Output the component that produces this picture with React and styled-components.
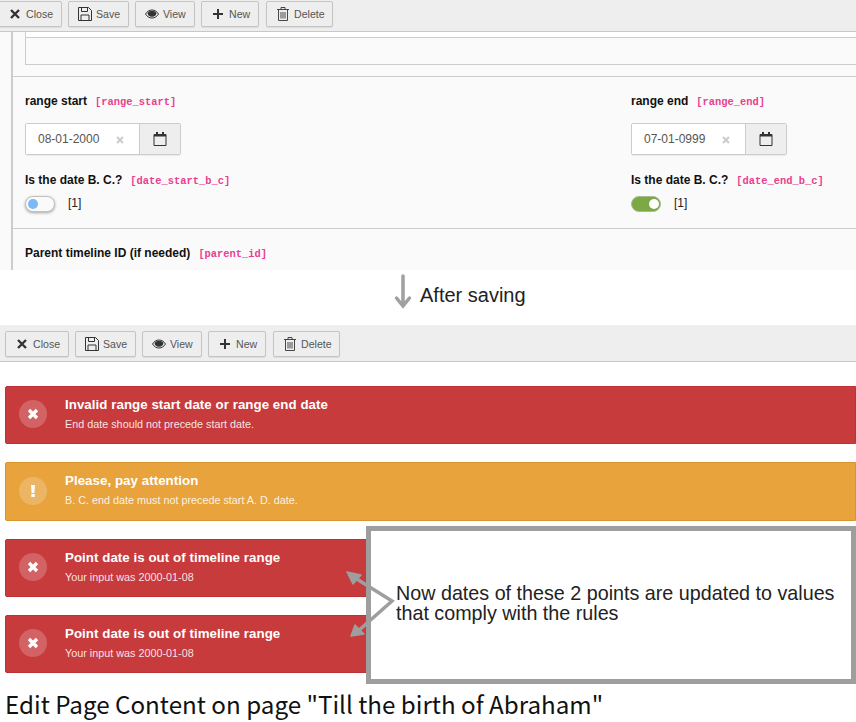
import React from 'react';
import styled, { createGlobalStyle } from 'styled-components';

const GlobalStyle = createGlobalStyle`
    html, body {
        margin: 0;
        padding: 0;
        background: #fff;
        font-family: "Liberation Sans", Arial, sans-serif;
    }
`;

const Page = styled.div`
    position: relative;
    width: 856px;
    height: 722px;
    overflow: hidden;
    background: #fff;
`;

const EditPanel = styled.div`
    height: 270px;
    overflow: hidden;
    background: #fafafa;
`;

const Toolbar = styled.div`
    display: flex;
    gap: 6px;
    box-sizing: border-box;
    height: ${(p) => (p.$compact ? '32px' : '37px')};
    padding: ${(p) => (p.$compact ? '1px 0 0 0' : '6px 0 0 5px')};
    background: #eee;
    border-bottom: 1px solid #c8c8c8;
    ${(p) => p.$compact && '& > :first-child { margin-left: -2px; }'}
`;

const ToolButton = styled.div`
    display: flex;
    align-items: center;
    gap: 4px;
    box-sizing: border-box;
    width: ${(p) => p.$width}px;
    height: 26px;
    margin-left: ${(p) => p.$shift || 0}px;
    padding-left: 9px;
    background: #eee;
    border: 1px solid #c4c4c4;
    border-radius: 2px;
    box-shadow: 0 1px 1px rgba(0, 0, 0, 0.08);
    color: #555;
    font-size: 10.6px;
`;

const Glyph = styled.svg`
    flex: none;
    width: 14px;
    height: 14px;
`;

const Indented = styled.div`
    height: 238px;
    margin-left: 11px;
    border-left: 2px solid #ccc;
`;

const Divided = styled.div`
    border-bottom: 1px solid #ccc;
    padding: ${(p) => p.$padding || '0'};
`;

const StubBox = styled.div`
    margin-left: 12px;
    height: 32px;
    border-left: 1px solid #ccc;
    border-bottom: 1px solid #ccc;
`;

const StubTop = styled.div`
    height: 5px;
    background: #fff;
    border-bottom: 1px solid #ccc;
`;

const FieldColumns = styled.div`
    display: grid;
    grid-template-columns: 606px 1fr;
    padding: 17px 0 16px 12px;
`;

const Field = styled.div`
    display: flex;
    flex-direction: column;
    align-items: flex-start;
`;

const LabelRow = styled.div`
    display: flex;
    align-items: baseline;
    gap: 8px;
    height: 14px;
    line-height: 14px;
    margin-bottom: ${(p) => p.$after || '0'};
    color: #111;
    font-size: 12px;
    font-weight: bold;
`;

const FieldName = styled.span`
    color: #e8408f;
    font-family: "Liberation Mono", monospace;
    font-size: 10.4px;
    font-weight: bold;
`;

const DateGroup = styled.div`
    display: flex;
    box-sizing: border-box;
    width: 156px;
    height: 32px;
    margin-bottom: 18px;
    border: 1px solid #ccc;
    border-radius: 2px;
    box-shadow: 0 1px 1px rgba(0, 0, 0, 0.06);
`;

const DateInput = styled.div`
    position: relative;
    display: flex;
    align-items: center;
    box-sizing: border-box;
    width: 113px;
    padding-left: 12px;
    background: #fff;
    color: #555;
    font-size: 12px;
`;

const ClearMark = styled.svg`
    position: absolute;
    left: 90px;
    top: 12px;
    width: 8px;
    height: 8px;
`;

const CalendarButton = styled.div`
    flex: 1;
    display: flex;
    align-items: center;
    justify-content: center;
    background: #eee;
    border-left: 1px solid #ccc;
`;

const ToggleRow = styled.div`
    display: flex;
    align-items: flex-start;
    gap: 13px;
    font-size: 12px;
    line-height: 14px;
    color: #222;
`;

const Toggle = styled.div`
    position: relative;
    box-sizing: border-box;
    width: 30px;
    height: 16px;
    border-radius: 8px;
    border: 1px solid ${(p) => (p.$on ? '#a9bd8d' : '#c2c2c2')};
    background: ${(p) => (p.$on ? '#7ca845' : '#fafafa')};
    box-shadow: ${(p) => (p.$on ? 'none' : '0 1px 3px rgba(0, 0, 0, 0.35)')};
`;

const Knob = styled.span`
    position: absolute;
    top: 2px;
    left: ${(p) => (p.$on ? '17px' : '2px')};
    width: 10px;
    height: 10px;
    border-radius: 50%;
    background: ${(p) => (p.$on ? '#fff' : '#7ab8f6')};
`;

const ParentField = styled.div`
    padding: 17px 0 0 12px;
`;

const Transition = styled.div`
    display: flex;
    align-items: center;
    gap: 8px;
    box-sizing: border-box;
    height: 55px;
    padding: 0 0 5px 394px;
    color: #222;
    font-size: 20px;
`;

const DownArrow = styled.svg`
    flex: none;
    margin-top: -6px;
`;

const Alerts = styled.div`
    display: flex;
    flex-direction: column;
    gap: 18px;
    padding: 24px 0 0 5px;
`;

const Alert = styled.div`
    display: flex;
    align-items: center;
    box-sizing: border-box;
    height: ${(p) => (p.$warning ? '59px' : '58px')};
    padding-left: 13px;
    background: ${(p) => (p.$warning ? '#e8a33c' : '#c73b3d')};
    border: 1px solid ${(p) => (p.$warning ? '#d9942e' : '#bd3335')};
    border-radius: 2px 0 0 2px;
    color: #fff;
`;

const AlertBadge = styled.div`
    flex: none;
    display: flex;
    align-items: center;
    justify-content: center;
    width: 28px;
    height: 28px;
    margin: -2px 18px 0 0;
    border-radius: 50%;
    background: rgba(255, 255, 255, 0.2);
`;

const AlertBody = styled.div`
    margin-top: -3px;
`;

const AlertTitle = styled.div`
    font-size: 13.3px;
    font-weight: bold;
    line-height: 16px;
    letter-spacing: 0.05px;
    margin-bottom: 4px;
`;

const AlertText = styled.div`
    font-size: 10.8px;
    line-height: 14px;
    color: rgba(255, 255, 255, 0.88);
`;

const Heading = styled.h1`
    margin: 14px 0 0 5px;
    color: #111;
    font-family: "Noto Sans CJK SC", "Noto Sans", sans-serif;
    font-size: 24.2px;
    font-weight: normal;
    line-height: 34px;
`;

const Callout = styled.div`
    position: absolute;
    left: 366px;
    top: 526px;
    display: flex;
    align-items: center;
    box-sizing: border-box;
    width: 490px;
    height: 158px;
    padding: 0 10px 4px 25px;
    background: #fff;
    border: 5px solid #9e9e9e;
    color: #222;
    font-size: 19.73px;
    line-height: 20px;
`;

const CalloutArrows = styled.svg`
    position: absolute;
    left: 340px;
    top: 565px;
    width: 60px;
    height: 80px;
`;

const CloseIcon = () => (
    <Glyph viewBox="0 0 14 14">
        <path d="M3 3l8 8M11 3l-8 8" stroke="#333" strokeWidth="2.4" />
    </Glyph>
);

const SaveIcon = () => (
    <Glyph viewBox="0 0 14 14" fill="none" stroke="#333">
        <path d="M.5.5h10l3 3v10H.5z" />
        <path d="M3.5.5v4h6v-4M3 13.5V8h8v5.5" />
    </Glyph>
);

const EyeIcon = () => (
    <Glyph viewBox="0 0 14 14">
        <path d="M.5 7C2 4.400 4.300 3 7 3s5 1.400 6.500 4C12 9.600 9.700 11 7 11S2 9.600.5 7z" fill="none" stroke="#333" />
        <path d="M2.500 6C3.500 4.500 5 3.700 7 3.700S10.500 4.500 11.500 6A4.500 4.500 0 0 1 7 9.800 4.500 4.500 0 0 1 2.500 6z" fill="#333" />
    </Glyph>
);

const PlusIcon = () => (
    <Glyph viewBox="0 0 14 14">
        <path d="M7 2v10M2 7h10" stroke="#333" strokeWidth="2" />
    </Glyph>
);

const TrashIcon = () => (
    <Glyph viewBox="0 0 14 14" fill="none" stroke="#333" strokeWidth="0.9">
        <path d="M1 2.500h12M5 2.500V.5h4v2M2.500 2.500v11h9v-11M5 5v6.500M7 5v6.500M9 5v6.500" />
    </Glyph>
);

const CalendarIcon = () => (
    <Glyph viewBox="0 0 14 14">
        <path d="M1 2.500h12v11H1z" fill="none" stroke="#333" />
        <path d="M1 2h12v2.500H1zM3 0h2v3H3zM9 0h2v3H9z" fill="#333" />
    </Glyph>
);

const tools = [
    { label: 'Close', width: 64, icon: <CloseIcon /> },
    { label: 'Save', width: 61, icon: <SaveIcon /> },
    { label: 'View', width: 60, icon: <EyeIcon /> },
    { label: 'New', width: 58, icon: <PlusIcon /> },
    { label: 'Delete', width: 67, shift: 1, icon: <TrashIcon /> },
];

const ToolRow = ({ compact }) => (
    <Toolbar $compact={compact}>
        {tools.map((tool) => (
            <ToolButton key={tool.label} $width={tool.width} $shift={tool.shift}>
                {tool.icon}
                {tool.label}
            </ToolButton>
        ))}
    </Toolbar>
);

const DateField = ({ label, name, value, flagName, on }) => (
    <Field>
        <LabelRow $after="15px">
            {label}
            <FieldName>[{name}]</FieldName>
        </LabelRow>
        <DateGroup>
            <DateInput>
                {value}
                <ClearMark viewBox="0 0 8 8">
                    <path d="M1 1l6 6M7 1L1 7" stroke="#ccc" strokeWidth="2" />
                </ClearMark>
            </DateInput>
            <CalendarButton>
                <CalendarIcon />
            </CalendarButton>
        </DateGroup>
        <LabelRow $after="9px">
            Is the date B. C.?
            <FieldName>[{flagName}]</FieldName>
        </LabelRow>
        <ToggleRow>
            <Toggle $on={on}>
                <Knob $on={on} />
            </Toggle>
            [1]
        </ToggleRow>
    </Field>
);

const MessageBox = ({ warning, title, text }) => (
    <Alert $warning={warning}>
        <AlertBadge>
            <Glyph viewBox="0 0 14 14">
                {warning ? (
                    <path d="M5 1h4l-.6 8H5.600zM5.300 10h3.400v3H5.300z" fill="#fff" />
                ) : (
                    <path d="M3 3l8 8M11 3l-8 8" stroke="#fff" strokeWidth="3.400" />
                )}
            </Glyph>
        </AlertBadge>
        <AlertBody>
            <AlertTitle>{title}</AlertTitle>
            <AlertText>{text}</AlertText>
        </AlertBody>
    </Alert>
);

const App = () => (
    <Page>
        <GlobalStyle />
        <EditPanel>
            <ToolRow compact />
            <Indented>
                <Divided $padding="0 0 11px 0">
                    <StubBox>
                        <StubTop />
                    </StubBox>
                </Divided>
                <Divided>
                    <FieldColumns>
                        <DateField label="range start" name="range_start" value="08-01-2000" flagName="date_start_b_c" />
                        <DateField label="range end" name="range_end" value="07-01-0999" flagName="date_end_b_c" on />
                    </FieldColumns>
                </Divided>
                <ParentField>
                    <LabelRow>
                        Parent timeline ID (if needed)
                        <FieldName>[parent_id]</FieldName>
                    </LabelRow>
                </ParentField>
            </Indented>
        </EditPanel>
        <Transition>
            <DownArrow width="18" height="36" viewBox="0 0 18 36">
                <path d="M9 2v30M2.500 24L9 32l6.500-8" fill="none" stroke="#a0a0a0" strokeWidth="3.500" strokeLinecap="round" />
            </DownArrow>
            After saving
        </Transition>
        <ToolRow />
        <Alerts>
            <MessageBox title="Invalid range start date or range end date" text="End date should not precede start date." />
            <MessageBox warning title="Please, pay attention" text="B. C. end date must not precede start A. D. date." />
            <MessageBox title="Point date is out of timeline range" text="Your input was 2000-01-08" />
            <MessageBox title="Point date is out of timeline range" text="Your input was 2000-01-08" />
        </Alerts>
        <Heading>Edit Page Content on page "Till the birth of Abraham"</Heading>
        <Callout>
            <div>
                Now dates of these 2 points are updated to values
                <br />
                that comply with the rules
            </div>
        </Callout>
        <CalloutArrows viewBox="0 0 60 80">
            <path d="M12 11L52 36L17 67" fill="none" stroke="#9e9e9e" strokeWidth="3.500" />
            <path d="M7 7L21 10L13 19z" fill="#9e9e9e" stroke="#9e9e9e" strokeWidth="1.500" strokeLinejoin="round" />
            <path d="M11 71L15 60L24 69z" fill="#9e9e9e" stroke="#9e9e9e" strokeWidth="1.500" strokeLinejoin="round" />
        </CalloutArrows>
    </Page>
);

export default App;
